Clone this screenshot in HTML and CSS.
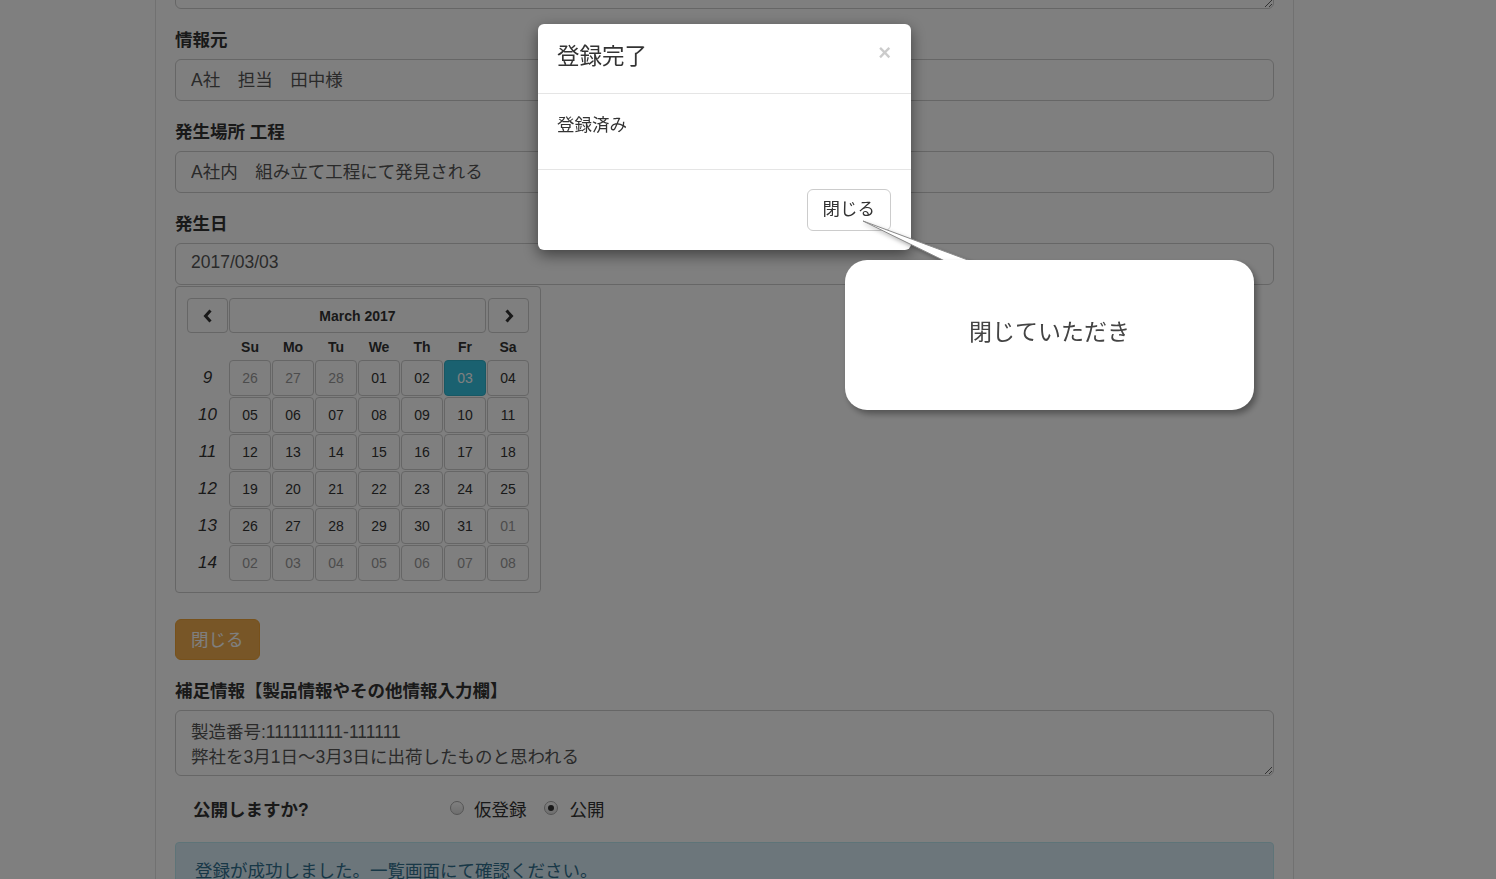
FILE: index.html
```html
<!DOCTYPE html>
<html lang="ja">
<head>
<meta charset="utf-8">
<title>登録</title>
<link rel="stylesheet" href="styles.css">
</head>
<body>
<div class="container">
  <textarea class="ta-top" readonly></textarea>

  <div class="form-group">
    <label class="lbl">情報元</label>
    <input class="input" type="text" value="A社　担当　田中様" readonly>
  </div>

  <div class="form-group">
    <label class="lbl">発生場所 工程</label>
    <input class="input" type="text" value="A社内　組み立て工程にて発見される" readonly>
  </div>

  <div class="form-group date-group">
    <label class="lbl">発生日</label>
    <input class="input" type="text" value="2017/03/03" readonly>
    <div class="dp">
      <div class="dp-grid">
        <div class="nav prev"><svg width="10" height="14" viewBox="0 0 10 14"><path d="M7.5 1.5 L2.5 7 L7.5 12.5" fill="none" stroke="#333" stroke-width="3"/></svg></div>
        <div class="nav title">March 2017</div>
        <div class="nav next"><svg width="10" height="14" viewBox="0 0 10 14"><path d="M2.5 1.5 L7.5 7 L2.5 12.5" fill="none" stroke="#333" stroke-width="3"/></svg></div>

        <div class="dow"></div><div class="dow">Su</div><div class="dow">Mo</div><div class="dow">Tu</div><div class="dow">We</div><div class="dow">Th</div><div class="dow">Fr</div><div class="dow">Sa</div>

        <div class="wk">9</div><div class="day old">26</div><div class="day old">27</div><div class="day old">28</div><div class="day">01</div><div class="day">02</div><div class="day active">03</div><div class="day">04</div>
        <div class="wk">10</div><div class="day">05</div><div class="day">06</div><div class="day">07</div><div class="day">08</div><div class="day">09</div><div class="day">10</div><div class="day">11</div>
        <div class="wk">11</div><div class="day">12</div><div class="day">13</div><div class="day">14</div><div class="day">15</div><div class="day">16</div><div class="day">17</div><div class="day">18</div>
        <div class="wk">12</div><div class="day">19</div><div class="day">20</div><div class="day">21</div><div class="day">22</div><div class="day">23</div><div class="day">24</div><div class="day">25</div>
        <div class="wk">13</div><div class="day">26</div><div class="day">27</div><div class="day">28</div><div class="day">29</div><div class="day">30</div><div class="day">31</div><div class="day old">01</div>
        <div class="wk">14</div><div class="day old">02</div><div class="day old">03</div><div class="day old">04</div><div class="day old">05</div><div class="day old">06</div><div class="day old">07</div><div class="day old">08</div>
      </div>
    </div>
    <button class="btn-warning" type="button">閉じる</button>
  </div>

  <div class="form-group">
    <label class="lbl">補足情報【製品情報やその他情報入力欄】</label>
    <textarea class="ta" readonly>製造番号:111111111-111111
弊社を3月1日～3月3日に出荷したものと思われる</textarea>
  </div>

  <div class="radio-row">
    <div class="q">公開しますか?</div>
    <label class="opt"><input type="radio" name="pub"><span>仮登録</span></label>
    <label class="opt"><input type="radio" name="pub" checked><span>公開</span></label>
  </div>

  <div class="alert">登録が成功しました。一覧画面にて確認ください。</div>
</div>

<div class="backdrop"></div>

<div class="modal">
  <div class="modal-header">
    <h4 class="modal-title">登録完了</h4>
    <span class="close">×</span>
  </div>
  <div class="modal-body">登録済み</div>
  <div class="modal-footer">
    <button class="btn-default" type="button">閉じる</button>
  </div>
</div>

<svg class="tail" width="140" height="56" viewBox="0 0 140 56">
  <polygon points="8,7 129,52 100,52" fill="#fff" stroke="#8a8a8a" stroke-width="1"/>
</svg>
<div class="callout">閉じていただき</div>
</body>
</html>
```

FILE: styles.css
```css
html, body {
  margin: 0;
  height: 100%;
  overflow: hidden;
  background: #fff;
}

body {
  font-family: "Liberation Sans", "Noto Sans CJK JP", sans-serif;
  color: #333;
}

.container {
  margin-left: 155px;
  width: 1139px;
  min-height: 100%;
  box-sizing: border-box;
  padding: 0 19px;
  border-left: 1px solid #e3e3e3;
  border-right: 1px solid #e3e3e3;
}

.ta-top {
  display: block;
  box-sizing: border-box;
  width: 100%;
  height: 59px;
  margin: -50px 0 18px;
  border: 1px solid #ccc;
  border-radius: 6px;
  resize: vertical;
}

.form-group {
  margin-bottom: 18px;
}

.lbl {
  display: block;
  font-size: 17.5px;
  font-weight: bold;
  line-height: 22px;
  padding-top: 2px;
  margin-bottom: 8px;
  color: #333;
}

.input {
  display: block;
  box-sizing: border-box;
  width: 100%;
  height: 42px;
  margin: 0;
  padding: 0 15px 3px;
  border: 1px solid #ccc;
  border-radius: 6px;
  font-family: inherit;
  font-size: 17.5px;
  color: #555;
  background: #fff;
  outline: none;
}

/* datepicker */
.dp {
  width: 366px;
  box-sizing: border-box;
  margin-top: 1px;
  padding: 11px;
  border: 1px solid #ccc;
  border-radius: 4px;
  background: #fff;
}

.dp-grid {
  display: grid;
  grid-template-columns: 41px repeat(7, 42px);
  grid-template-rows: 35px 25px repeat(6, 36px);
  column-gap: 1px;
  row-gap: 1px;
  font-size: 14px;
}

.nav, .day {
  box-sizing: border-box;
  border: 1px solid #ccc;
  border-radius: 4px;
  display: flex;
  align-items: center;
  justify-content: center;
}

.nav.title {
  grid-column: 2 / span 6;
  font-weight: bold;
  color: #333;
}

.nav.prev { grid-column: 1; }
.nav.next { grid-column: 8; margin-left: 1px; }

.dow {
  display: flex;
  align-items: center;
  justify-content: center;
  font-weight: bold;
  color: #333;
}

.wk {
  display: flex;
  align-items: center;
  justify-content: center;
  font-style: italic;
  font-size: 17px;
  color: #333;
}

.day { color: #333; }
.day.old { color: #999; }
.day.active {
  background: #34c3e0;
  border-color: #2fb0c9;
  color: #fff;
}

.btn-warning {
  display: block;
  margin-top: 26px;
  margin-bottom: 2px;
  height: 41px;
  padding: 0 15px 2px;
  border: 1px solid #eea236;
  border-radius: 6px;
  background: #f0ad4e;
  color: #fff;
  font-family: inherit;
  font-size: 17.5px;
}

.ta {
  display: block;
  box-sizing: border-box;
  width: 100%;
  height: 66px;
  padding: 9px 15px 5px;
  border: 1px solid #ccc;
  border-radius: 6px;
  font-family: inherit;
  font-size: 17.5px;
  line-height: 25px;
  color: #555;
  resize: vertical;
  overflow: hidden;
}

.radio-row {
  display: flex;
  align-items: center;
  height: 24px;
  margin-top: 20px;
  font-size: 17.5px;
}

.q {
  box-sizing: border-box;
  width: 275px;
  padding-left: 18px;
  font-weight: bold;
}

.opt {
  display: flex;
  align-items: center;
  margin-right: 17px;
}

.opt input {
  appearance: none;
  -webkit-appearance: none;
  width: 14px;
  height: 14px;
  margin: 0 10px 0 0;
  border: 1px solid #aaa;
  border-radius: 50%;
  background: linear-gradient(#fff, #ddd);
  box-sizing: border-box;
  position: relative;
}

.opt input:checked {
  margin-right: 12px;
}

.opt input:checked::after {
  content: "";
  position: absolute;
  left: 3px;
  top: 3px;
  width: 6px;
  height: 6px;
  border-radius: 50%;
  background: #333;
}

.alert {
  margin-top: 22px;
  padding: 16px 19px 15px;
  border: 1px solid #bce8f1;
  border-radius: 4px;
  background: #d9edf7;
  color: #31708f;
  font-size: 17.5px;
  line-height: 24px;
}

/* overlay */
.backdrop {
  position: fixed;
  inset: 0;
  background: rgba(0, 0, 0, 0.5);
  z-index: 5;
}

.modal {
  position: fixed;
  left: 538px;
  top: 24px;
  width: 373px;
  background: #fff;
  border-radius: 6px;
  box-shadow: 0 5px 15px rgba(0, 0, 0, 0.5);
  z-index: 10;
}

.modal-header {
  display: flex;
  justify-content: space-between;
  align-items: flex-start;
  padding: 17px 20px 20px 19px;
  border-bottom: 1px solid #e5e5e5;
}

.modal-title {
  margin: 0;
  font-size: 22.5px;
  font-weight: normal;
  line-height: 32px;
  color: #333;
}

.close {
  font-size: 22px;
  font-weight: bold;
  line-height: 24px;
  color: #000;
  opacity: 0.2;
}

.modal-body {
  padding: 20px 20px 33px 19px;
  font-size: 17.5px;
  line-height: 22px;
  color: #333;
}

.modal-footer {
  padding: 19px 20px 19px;
  border-top: 1px solid #e5e5e5;
  text-align: right;
}

.btn-default {
  display: inline-block;
  vertical-align: top;
  height: 42px;
  padding: 0 15px 5px;
  border: 1px solid #ccc;
  border-radius: 6px;
  background: #fff;
  color: #333;
  font-family: inherit;
  font-size: 17.5px;
}

.tail {
  position: fixed;
  left: 855px;
  top: 214px;
  z-index: 11;
  filter: drop-shadow(1px 2px 2px rgba(0, 0, 0, 0.3));
}

.callout {
  position: fixed;
  left: 845px;
  top: 260px;
  width: 409px;
  height: 150px;
  box-sizing: border-box;
  padding-bottom: 10px;
  display: flex;
  align-items: center;
  justify-content: center;
  background: #fff;
  border-radius: 22px;
  box-shadow: 3px 4px 6px rgba(0, 0, 0, 0.35);
  font-size: 23px;
  color: #444;
  z-index: 12;
}
```
